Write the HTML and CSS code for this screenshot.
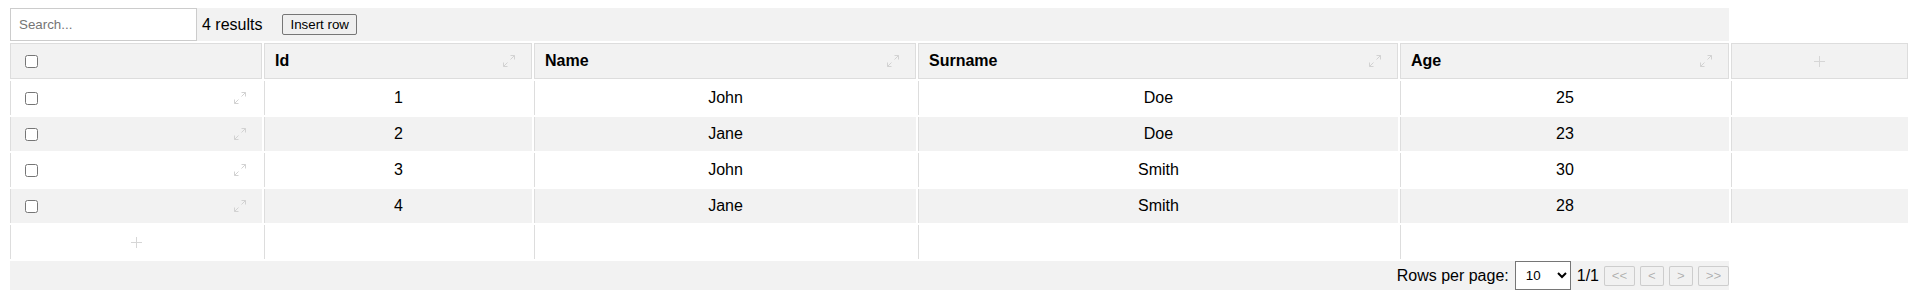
FILE: index.html
```html
<!DOCTYPE html>
<html lang="en">
<head>
<meta charset="UTF-8">
<meta name="viewport" content="width=device-width, initial-scale=1.0">
<title>Data Table</title>
<link rel="stylesheet" href="styles.css">
</head>
<body>
<table class="grid">
  <colgroup>
    <col class="col-select">
    <col class="col-id">
    <col class="col-name">
    <col class="col-surname">
    <col class="col-age">
    <col class="col-add">
  </colgroup>
  <thead>
    <tr class="toolbar-row">
      <td colspan="5" class="toolbar">
        <div class="toolbar-inner">
          <input type="text" class="search" placeholder="Search...">
          <span class="count">4 results</span>
          <button type="button" class="insert-btn">Insert row</button>
        </div>
      </td>
    </tr>
    <tr class="head-row">
      <th class="head-cell"><div class="cell-inner"><input type="checkbox"></div></th>
      <th class="head-cell"><div class="cell-inner"><span>Id</span><svg class="resize-icon" viewBox="0 0 14 14"><path d="M1.5 12.5 L5.5 8.5 M8.5 5.5 L12.5 1.5 M8.5 1.5 H12.5 V5.5 M1.5 8.5 V12.5 H5.5"/></svg></div></th>
      <th class="head-cell"><div class="cell-inner"><span>Name</span><svg class="resize-icon" viewBox="0 0 14 14"><path d="M1.5 12.5 L5.5 8.5 M8.5 5.5 L12.5 1.5 M8.5 1.5 H12.5 V5.5 M1.5 8.5 V12.5 H5.5"/></svg></div></th>
      <th class="head-cell"><div class="cell-inner"><span>Surname</span><svg class="resize-icon" viewBox="0 0 14 14"><path d="M1.5 12.5 L5.5 8.5 M8.5 5.5 L12.5 1.5 M8.5 1.5 H12.5 V5.5 M1.5 8.5 V12.5 H5.5"/></svg></div></th>
      <th class="head-cell"><div class="cell-inner"><span>Age</span><svg class="resize-icon" viewBox="0 0 14 14"><path d="M1.5 12.5 L5.5 8.5 M8.5 5.5 L12.5 1.5 M8.5 1.5 H12.5 V5.5 M1.5 8.5 V12.5 H5.5"/></svg></div></th>
      <th class="head-cell add-col"><svg class="plus-icon" viewBox="0 0 11 11"><path d="M5.5 0 V11 M0 5.5 H11"/></svg></th>
    </tr>
  </thead>
  <tbody>
    <tr class="body-row">
      <td class="select-cell"><div class="cell-inner"><input type="checkbox"><svg class="resize-icon" viewBox="0 0 14 14"><path d="M1.5 12.5 L5.5 8.5 M8.5 5.5 L12.5 1.5 M8.5 1.5 H12.5 V5.5 M1.5 8.5 V12.5 H5.5"/></svg></div></td>
      <td>1</td>
      <td>John</td>
      <td>Doe</td>
      <td>25</td>
      <td></td>
    </tr>
    <tr class="body-row">
      <td class="select-cell"><div class="cell-inner"><input type="checkbox"><svg class="resize-icon" viewBox="0 0 14 14"><path d="M1.5 12.5 L5.5 8.5 M8.5 5.5 L12.5 1.5 M8.5 1.5 H12.5 V5.5 M1.5 8.5 V12.5 H5.5"/></svg></div></td>
      <td>2</td>
      <td>Jane</td>
      <td>Doe</td>
      <td>23</td>
      <td></td>
    </tr>
    <tr class="body-row">
      <td class="select-cell"><div class="cell-inner"><input type="checkbox"><svg class="resize-icon" viewBox="0 0 14 14"><path d="M1.5 12.5 L5.5 8.5 M8.5 5.5 L12.5 1.5 M8.5 1.5 H12.5 V5.5 M1.5 8.5 V12.5 H5.5"/></svg></div></td>
      <td>3</td>
      <td>John</td>
      <td>Smith</td>
      <td>30</td>
      <td></td>
    </tr>
    <tr class="body-row">
      <td class="select-cell"><div class="cell-inner"><input type="checkbox"><svg class="resize-icon" viewBox="0 0 14 14"><path d="M1.5 12.5 L5.5 8.5 M8.5 5.5 L12.5 1.5 M8.5 1.5 H12.5 V5.5 M1.5 8.5 V12.5 H5.5"/></svg></div></td>
      <td>4</td>
      <td>Jane</td>
      <td>Smith</td>
      <td>28</td>
      <td></td>
    </tr>
    <tr class="body-row add-row">
      <td><svg class="plus-icon" viewBox="0 0 11 11"><path d="M5.5 0 V11 M0 5.5 H11"/></svg></td>
      <td></td>
      <td></td>
      <td></td>
      <td></td>
    </tr>
  </tbody>
  <tfoot>
    <tr class="pager-row">
      <td colspan="5" class="pager-cell">
        <div class="pager">
          <span>Rows per page:</span>
          <select class="page-size">
            <option value="10">10</option>
            <option value="20">20</option>
            <option value="50">50</option>
          </select>
          <span class="page-info">1/1</span>
          <button type="button" class="pg-btn pg-wide" disabled>&lt;&lt;</button>
          <button type="button" class="pg-btn" disabled>&lt;</button>
          <button type="button" class="pg-btn" disabled>&gt;</button>
          <button type="button" class="pg-btn pg-wide" disabled>&gt;&gt;</button>
        </div>
      </td>
    </tr>
  </tfoot>
</table>
</body>
</html>
```

FILE: styles.css
```css
/* CSS styles */
body {
  margin: 6px 8px 8px;
  font-family: "Liberation Sans", Arial, sans-serif;
  font-size: 16px;
  color: #000;
}

.grid {
  width: 100%;
  border-spacing: 2px;
  table-layout: fixed;
}

.col-select { width: 252px; }
.col-id { width: 268px; }
.col-name { width: 382px; }
.col-surname { width: 480px; }
.col-age { width: 329px; }

th,
td {
  padding: 0 10px;
  vertical-align: middle;
}

/* toolbar */
.toolbar {
  padding: 0;
  background-color: #f2f2f2;
}

.toolbar-inner {
  display: flex;
  align-items: center;
}

.search {
  box-sizing: border-box;
  width: 187px;
  height: 33px;
  margin: 0;
  padding: 0 8px;
  border: 1px solid #ccc;
  font-family: "Liberation Sans", Arial, sans-serif;
  font-size: 13.33px;
}

.count {
  margin-left: 5px;
}

.insert-btn {
  margin-left: 20px;
  height: 21px;
  padding: 0 7px;
  font-family: "Liberation Sans", Arial, sans-serif;
  font-size: 13.33px;
  color: #000;
  background-color: #efefef;
  border: 1px solid #767676;
  border-radius: 2px;
}

/* header */
.head-row {
  height: 36px;
}

.head-cell {
  background-color: #f2f2f2;
  border: 1px solid #ddd;
  text-align: left;
  font-weight: bold;
}

.cell-inner {
  display: flex;
  align-items: center;
  justify-content: space-between;
}

.cell-inner input[type="checkbox"] {
  margin: 3px 3px 3px 4px;
}

.resize-icon {
  width: 14px;
  height: 14px;
  margin-right: 5px;
  fill: none;
  stroke: #d2d2d2;
  stroke-width: 1;
}

.plus-icon {
  display: block;
  width: 11px;
  height: 11px;
  margin: 0 auto;
  fill: none;
  stroke: #d6d6d6;
  stroke-width: 1;
}

/* body */
.body-row {
  height: 34px;
}

.body-row td {
  border-left: 1px solid #ddd;
  text-align: center;
}

.body-row:nth-child(even) td {
  background-color: #f2f2f2;
}

.body-row td.select-cell {
  text-align: left;
}

/* pager */
.pager-row {
  height: 29px;
}

.pager-cell {
  padding: 0;
  background-color: #f2f2f2;
}

.pager {
  display: flex;
  justify-content: flex-end;
  align-items: center;
  gap: 5px;
}

.page-size {
  box-sizing: border-box;
  width: 56px;
  height: 29px;
  margin: 0 1px;
  padding-left: 6px;
  font-family: "Liberation Sans", Arial, sans-serif;
  font-size: 13.33px;
  color: #000;
  background-color: #fff;
  border: 1px solid #767676;
  border-radius: 0;
}

.pg-btn {
  width: 24px;
  height: 20px;
  padding: 0;
  font-family: "Liberation Sans", Arial, sans-serif;
  font-size: 13.33px;
  color: rgba(16, 16, 16, 0.3);
  background-color: rgba(239, 239, 239, 0.3);
  border: 1px solid rgba(118, 118, 118, 0.3);
  border-radius: 2px;
}

.pg-btn.pg-wide {
  width: 31px;
}
```
